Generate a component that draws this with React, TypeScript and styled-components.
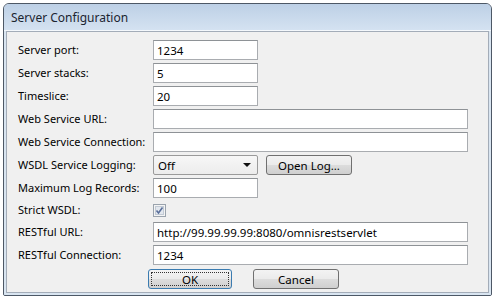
import styled, { createGlobalStyle } from "styled-components";

const GlobalStyle = createGlobalStyle`
  html, body {
    margin: 0;
    padding: 0;
    background: #fff;
  }
  body {
    font-family: "Noto Sans", "Open Sans", sans-serif;
    font-size: 11px;
    color: #000;
  }
`;

const Window = styled.div`
  margin: 3px 0 0 3px;
  width: 487px;
  height: 291px;
  border: 1px solid #4d5866;
  border-radius: 6px 6px 2px 2px;
  background: #d3e0ee;
  display: flex;
  flex-direction: column;
  overflow: hidden;
`;

const TitleBar = styled.div`
  height: 26px;
  display: flex;
  align-items: center;
  padding-left: 7px;
  font-size: 12px;
  color: #1b2430;
  background: linear-gradient(#bdd0e6, #d4e2f1);
  border-bottom: 1px solid #f4f8fc;
`;

const Frame = styled.div`
  flex: 1;
  display: flex;
  padding: 0 2px 2px 2px;
  background: #d9e5f1;
`;

const Content = styled.div`
  flex: 1;
  background: #f0f0f0;
  border: 1px solid #a3acb8;
  padding: 8px 0 0 11px;
  display: flex;
  flex-direction: column;
`;

const Form = styled.div`
  display: grid;
  grid-template-columns: 135px auto;
  row-gap: 3px;
  align-items: center;
`;

const Label = styled.div`
  white-space: nowrap;
  line-height: 14px;
`;

const Cell = styled.div<{ $h?: number }>`
  display: flex;
  align-items: center;
  gap: 8px;
  height: ${(p) => p.$h ?? 20}px;
`;

const TextBox = styled.div<{ $wide?: boolean }>`
  box-sizing: border-box;
  width: ${(p) => (p.$wide ? 315 : 105)}px;
  height: 20px;
  background: #fff;
  border: 1px solid #a9acb0;
  border-top-color: #8e9296;
  padding: 0 3px;
  display: flex;
  align-items: center;
  font-size: 11.5px;
  white-space: nowrap;
`;

const Combo = styled.div`
  box-sizing: border-box;
  width: 105px;
  height: 20px;
  border: 1px solid #9a9a9a;
  border-radius: 2px;
  background: linear-gradient(#f7f7f7, #ececec);
  display: flex;
  align-items: center;
  justify-content: space-between;
  padding: 0 6px 0 4px;
  font-size: 11.5px;
`;

const Arrow = styled.span`
  width: 0;
  height: 0;
  border-left: 4px solid transparent;
  border-right: 4px solid transparent;
  border-top: 4px solid #111;
`;

const Button = styled.div<{ $w: number; $default?: boolean }>`
  box-sizing: border-box;
  width: ${(p) => p.$w}px;
  height: 20px;
  border: 1px solid ${(p) => (p.$default ? "#3a7bb0" : "#707070")};
  border-radius: 3px;
  background: linear-gradient(#f3f3f3 0%, #ebebeb 48%, #dcdcdc 52%, #cfcfcf 100%);
  display: flex;
  align-items: center;
  justify-content: center;
  font-size: 11.5px;
  padding: 2px;
`;

const Focus = styled.div`
  flex: 1;
  align-self: stretch;
  border: 1px dotted #333;
  display: flex;
  align-items: center;
  justify-content: center;
`;

const Footer = styled.div`
  display: flex;
  gap: 21px;
  padding-left: 130px;
  margin-top: 4px;
`;

function CheckBox() {
  return (
    <svg width="13" height="13" viewBox="0 0 13 13">
      <rect x="0.5" y="0.5" width="12" height="12" fill="#f4f4f4" stroke="#9aa3ad" />
      <rect x="2.5" y="2.5" width="8" height="8" fill="#e2e7ee" stroke="#c2cad4" />
      <path d="M3.5 6.5 L5.5 9 L9.5 3.5" fill="none" stroke="#5a6f9a" strokeWidth="1.6" />
    </svg>
  );
}

export default function App() {
  return (
    <>
      <GlobalStyle />
      <Window>
        <TitleBar>Server Configuration</TitleBar>
        <Frame>
          <Content>
            <Form>
              <Label>Server port:</Label>
              <Cell><TextBox>1234</TextBox></Cell>
              <Label>Server stacks:</Label>
              <Cell><TextBox>5</TextBox></Cell>
              <Label>Timeslice:</Label>
              <Cell><TextBox>20</TextBox></Cell>
              <Label>Web Service URL:</Label>
              <Cell><TextBox $wide /></Cell>
              <Label>Web Service Connection:</Label>
              <Cell><TextBox $wide /></Cell>
              <Label>WSDL Service Logging:</Label>
              <Cell>
                <Combo>Off<Arrow /></Combo>
                <Button $w={86}>Open Log...</Button>
              </Cell>
              <Label>Maximum Log Records:</Label>
              <Cell><TextBox>100</TextBox></Cell>
              <Label>Strict WSDL:</Label>
              <Cell $h={18}><CheckBox /></Cell>
              <Label>RESTful URL:</Label>
              <Cell><TextBox $wide>http://99.99.99.99:8080/omnisrestservlet</TextBox></Cell>
              <Label>RESTful Connection:</Label>
              <Cell><TextBox $wide>1234</TextBox></Cell>
            </Form>
            <Footer>
              <Button $w={84} $default><Focus>OK</Focus></Button>
              <Button $w={86}>Cancel</Button>
            </Footer>
          </Content>
        </Frame>
      </Window>
    </>
  );
}
